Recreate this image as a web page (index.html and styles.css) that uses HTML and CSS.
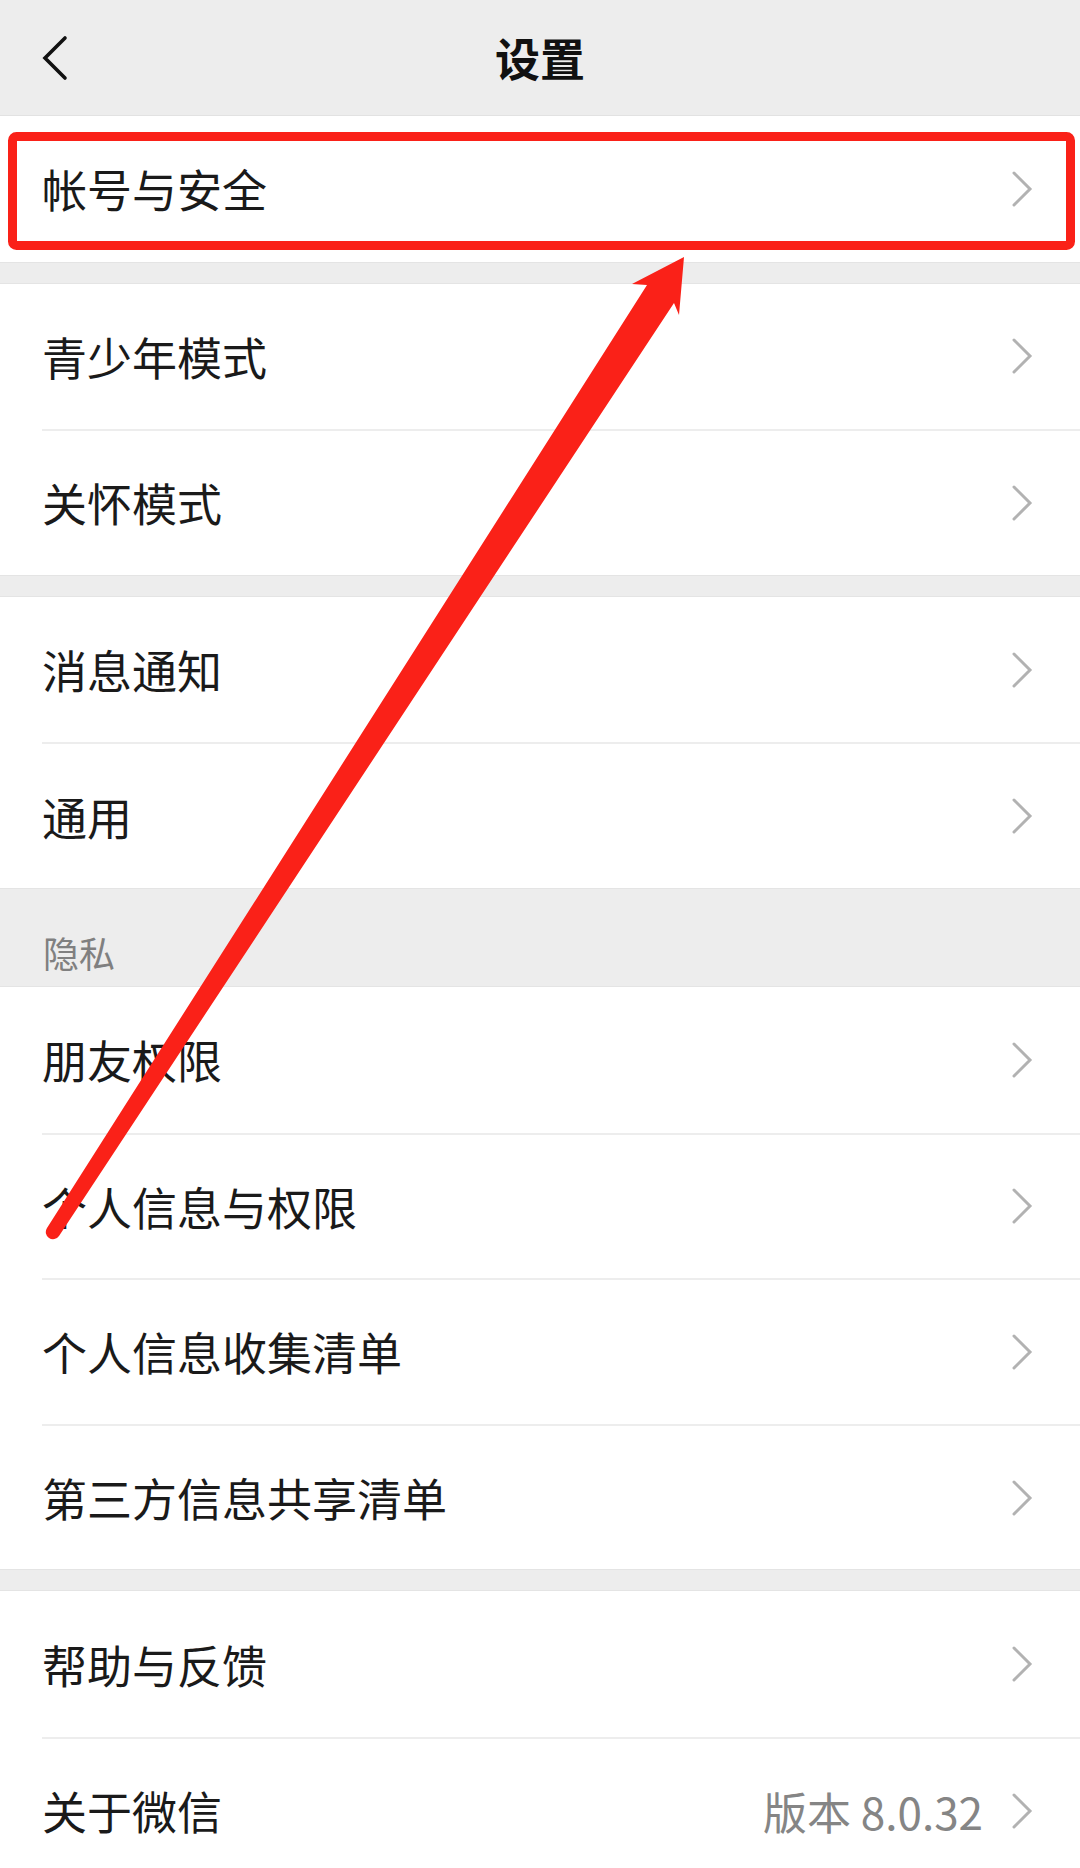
FILE: index.html
```html
<!DOCTYPE html>
<html lang="zh-CN">
<head>
    <meta charset="UTF-8">
    <meta name="viewport" content="width=device-width, initial-scale=1.0">
    <title>设置</title>
    <link rel="stylesheet" href="styles.css">
</head>
<body>
<div class="page">
    <header class="nav">
        <svg class="nav-back" width="30" height="48" viewBox="0 0 30 48">
            <polyline points="23,5 3,25 23,45" fill="none" stroke="#111" stroke-width="3.6" stroke-linecap="round" stroke-linejoin="miter"/>
        </svg>
        <h1 class="nav-title">设置</h1>
    </header>

    <div class="group">
        <div class="cell"><div class="cell-inner"><span class="cell-title">帐号与安全</span><svg class="arrow" width="22" height="36" viewBox="0 0 22 36"><polyline points="3,2 19,18 3,34" fill="none" stroke="#b2b2b2" stroke-width="3" stroke-linecap="round"/></svg></div></div>
    </div>

    <div class="gap"></div>
    <div class="group">
        <div class="cell"><div class="cell-inner"><span class="cell-title">青少年模式</span><svg class="arrow" width="22" height="36" viewBox="0 0 22 36"><polyline points="3,2 19,18 3,34" fill="none" stroke="#b2b2b2" stroke-width="3" stroke-linecap="round"/></svg></div></div>
        <div class="cell"><div class="cell-inner"><span class="cell-title">关怀模式</span><svg class="arrow" width="22" height="36" viewBox="0 0 22 36"><polyline points="3,2 19,18 3,34" fill="none" stroke="#b2b2b2" stroke-width="3" stroke-linecap="round"/></svg></div></div>
    </div>

    <div class="gap"></div>
    <div class="group">
        <div class="cell"><div class="cell-inner"><span class="cell-title">消息通知</span><svg class="arrow" width="22" height="36" viewBox="0 0 22 36"><polyline points="3,2 19,18 3,34" fill="none" stroke="#b2b2b2" stroke-width="3" stroke-linecap="round"/></svg></div></div>
        <div class="cell"><div class="cell-inner"><span class="cell-title">通用</span><svg class="arrow" width="22" height="36" viewBox="0 0 22 36"><polyline points="3,2 19,18 3,34" fill="none" stroke="#b2b2b2" stroke-width="3" stroke-linecap="round"/></svg></div></div>
    </div>

    <div class="section-label">隐私</div>
    <div class="group">
        <div class="cell"><div class="cell-inner"><span class="cell-title">朋友权限</span><svg class="arrow" width="22" height="36" viewBox="0 0 22 36"><polyline points="3,2 19,18 3,34" fill="none" stroke="#b2b2b2" stroke-width="3" stroke-linecap="round"/></svg></div></div>
        <div class="cell"><div class="cell-inner"><span class="cell-title">个人信息与权限</span><svg class="arrow" width="22" height="36" viewBox="0 0 22 36"><polyline points="3,2 19,18 3,34" fill="none" stroke="#b2b2b2" stroke-width="3" stroke-linecap="round"/></svg></div></div>
        <div class="cell"><div class="cell-inner"><span class="cell-title">个人信息收集清单</span><svg class="arrow" width="22" height="36" viewBox="0 0 22 36"><polyline points="3,2 19,18 3,34" fill="none" stroke="#b2b2b2" stroke-width="3" stroke-linecap="round"/></svg></div></div>
        <div class="cell"><div class="cell-inner"><span class="cell-title">第三方信息共享清单</span><svg class="arrow" width="22" height="36" viewBox="0 0 22 36"><polyline points="3,2 19,18 3,34" fill="none" stroke="#b2b2b2" stroke-width="3" stroke-linecap="round"/></svg></div></div>
    </div>

    <div class="gap"></div>
    <div class="group">
        <div class="cell"><div class="cell-inner"><span class="cell-title">帮助与反馈</span><svg class="arrow" width="22" height="36" viewBox="0 0 22 36"><polyline points="3,2 19,18 3,34" fill="none" stroke="#b2b2b2" stroke-width="3" stroke-linecap="round"/></svg></div></div>
        <div class="cell"><div class="cell-inner"><span class="cell-title">关于微信</span><span class="cell-value">版本 8.0.32</span><svg class="arrow" width="22" height="36" viewBox="0 0 22 36"><polyline points="3,2 19,18 3,34" fill="none" stroke="#b2b2b2" stroke-width="3" stroke-linecap="round"/></svg></div></div>
    </div>

    <!-- annotation drawn over the screenshot -->
    <svg class="markup" width="1080" height="1868" viewBox="0 0 1080 1868">
        <rect x="12.5" y="136.5" width="1058" height="109" rx="4" fill="none" stroke="#fa2118" stroke-width="9"/>
        <path d="M47 1228 L647 285 L632 284 L684 257 L679 315 L674 303 L59 1236 A7 7 0 0 1 47 1228 Z" fill="#fa2118"/>
    </svg>
</div>
</body>
</html>
```

FILE: styles.css
```css
body {
    margin: 0;
    background-color: #ededed;
    font-family: "Noto Sans CJK SC", "Noto Sans", sans-serif;
    color: #1a1a1a;
}
.page {
    position: relative;
    width: 1080px;
    height: 1868px;
    overflow: hidden;
}
.nav {
    height: 116px;
    display: flex;
    align-items: center;
    justify-content: center;
    position: relative;
    box-sizing: border-box;
    border-bottom: 1px solid #e2e2e2;
}
.nav-back {
    position: absolute;
    left: 42px;
    top: 33px;
}
.nav-title {
    margin: 0;
    font-size: 45px;
    font-weight: 700;
    line-height: 1;
    color: #111;
}
.group {
    background-color: #fff;
}
.gap {
    height: 22px;
    border-top: 1px solid #e4e4e4;
    border-bottom: 1px solid #e4e4e4;
    box-sizing: border-box;
}
.section-label {
    height: 99px;
    box-sizing: border-box;
    padding: 45px 0 0 43px;
    font-size: 36px;
    line-height: 36px;
    color: #808080;
    border-top: 1px solid #e4e4e4;
    border-bottom: 1px solid #e4e4e4;
}
.cell {
    padding-left: 42px;
}
.cell-inner {
    height: 145.6px;
    box-sizing: border-box;
    display: flex;
    align-items: center;
    padding-right: 47px;
    border-top: 2px solid #ededed;
}
.cell:first-child .cell-inner {
    border-top: none;
}
.cell-title {
    flex: 1;
    font-size: 45px;
    line-height: 1;
}
.cell-value {
    font-size: 44px;
    line-height: 1;
    color: #858585;
    margin-right: 28px;
}
.arrow {
    display: block;
}
.markup {
    position: absolute;
    left: 0;
    top: 0;
    pointer-events: none;
}
```
